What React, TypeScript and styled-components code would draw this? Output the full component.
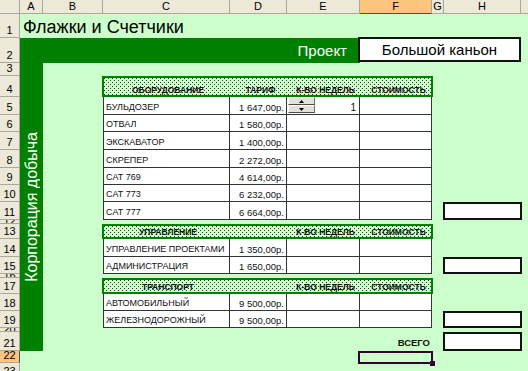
import styled, { createGlobalStyle } from 'styled-components'
import type { ReactNode } from 'react'

const GlobalStyle = createGlobalStyle`
  html, body {
    margin: 0;
    padding: 0;
  }
  body {
    background: #ccffcc;
    font-family: 'Liberation Sans', Arial, sans-serif;
    overflow: hidden;
  }
  * {
    box-sizing: border-box;
  }
`

// widths of columns A..I and heights of rows 1..23, in px
const COL_WIDTHS = [23, 60, 127, 57, 73, 72, 12, 77, 64]
const ROW_HEIGHTS = [24, 25, 13, 21, 18, 17, 18, 18, 17, 17, 18, 4, 15, 18, 17, 4, 16, 17, 17, 4, 19, 12, 16]
const LETTERS = ['A', 'B', 'C', 'D', 'E', 'F', 'G', 'H', '']

// "C4:F11" -> grid-area
const at = (range: string) => {
  const [a, b = a] = range.split(':')
  const col = (s: string) => s.charCodeAt(0) - 63
  const row = (s: string) => parseInt(s.slice(1), 10) + 1
  return `${row(a)} / ${col(a)} / ${row(b) + 1} / ${col(b) + 1}`
}

type Entry = { name: string; price: string; qty?: ReactNode }

const equipment: Entry[] = [
  { name: 'БУЛЬДОЗЕР', price: '1 647,00р.', qty: 1 },
  { name: 'ОТВАЛ', price: '1 580,00р.' },
  { name: 'ЭКСКАВАТОР', price: '1 400,00р.' },
  { name: 'СКРЕПЕР', price: '2 272,00р.' },
  { name: 'CAT 769', price: '4 614,00р.' },
  { name: 'CAT 773', price: '6 232,00р.' },
  { name: 'CAT 777', price: '6 664,00р.' },
]
const management: Entry[] = [
  { name: 'УПРАВЛЕНИЕ ПРОЕКТАМИ', price: '1 350,00р.' },
  { name: 'АДМИНИСТРАЦИЯ', price: '1 650,00р.' },
]
const transport: Entry[] = [
  { name: 'АВТОМОБИЛЬНЫЙ', price: '9 500,00р.' },
  { name: 'ЖЕЛЕЗНОДОРОЖНЫЙ', price: '9 500,00р.' },
]

const Spinner = () => (
  <SpinBox>
    <SpinButton>
      <svg width="5" height="3" viewBox="0 0 5 3"><path d="M2.5 0 5 3H0z" fill="#000" /></svg>
    </SpinButton>
    <SpinButton>
      <svg width="5" height="3" viewBox="0 0 5 3"><path d="M0 0h5L2.5 3z" fill="#000" /></svg>
    </SpinButton>
  </SpinBox>
)

const Table = ({ area, titles, heights, rows }: { area: string; titles: string[]; heights: number[]; rows: Entry[] }) => (
  <TableBlock $area={area}>
    <HeadRow $h={heights[0]}>
      {titles.map((t, i) => (
        <HeadCell key={i}>{t}</HeadCell>
      ))}
    </HeadRow>
    {rows.map((r, i) => (
      <DataRow key={r.name} $h={heights[i + 1]}>
        <NameCell>{r.name}</NameCell>
        <NumCell>{r.price}</NumCell>
        <QtyCell>
          {r.qty !== undefined && (
            <>
              <Spinner />
              <span>{r.qty}</span>
            </>
          )}
        </QtyCell>
        <NumCell />
      </DataRow>
    ))}
  </TableBlock>
)

export default function App() {
  return (
    <>
      <GlobalStyle />
      <Sheet>
        <Corner $area="1 / 1 / 2 / 2" />
        {LETTERS.map((l, i) => (
          <ColHead key={i} $area={`1 / ${i + 2} / 2 / ${i + 3}`} $active={l === 'F'}>
            {l}
          </ColHead>
        ))}
        {ROW_HEIGHTS.map((h, i) => (
          <RowHead key={i} $area={`${i + 2} / 1 / ${i + 3} / 2`} $active={i + 1 === 22} $thin={h < 8}>
            {i + 1}
          </RowHead>
        ))}

        <Title $area={at('A1:F1')}>Флажки и Счетчики</Title>
        <GreenBar $area={at('A2:E2')}>Проект</GreenBar>
        <ProjectBox $area={at('F2:H2')}>Большой каньон</ProjectBox>
        <SideBand $area={at('A3:A21')}>
          <VerticalLabel>Корпорация добыча</VerticalLabel>
        </SideBand>

        <Table
          area={at('C4:F11')}
          titles={['ОБОРУДОВАНИЕ', 'ТАРИФ', 'К-ВО НЕДЕЛЬ', 'СТОИМОСТЬ']}
          heights={[21, 18, 17, 18, 18, 17, 17, 18]}
          rows={equipment}
        />
        <Table
          area={at('C13:F15')}
          titles={['УПРАВЛЕНИЕ', '', 'К-ВО НЕДЕЛЬ', 'СТОИМОСТЬ']}
          heights={[15, 18, 17]}
          rows={management}
        />
        <Table
          area={at('C17:F19')}
          titles={['ТРАНСПОРТ', '', 'К-ВО НЕДЕЛЬ', 'СТОИМОСТЬ']}
          heights={[16, 17, 17]}
          rows={transport}
        />

        <SumBox $area={at('H11')} />
        <SumBox $area={at('H15')} />
        <SumBox $area={at('H19')} />
        <SumBox $area={at('H21')} />
        <TotalLabel $area={at('F21')}>ВСЕГО</TotalLabel>
        <Selection $area={at('F22')} />
      </Sheet>
    </>
  )
}

/**
 * style定義
 */
type AreaProps = { $area: string }

const Sheet = styled.div`
  display: grid;
  grid-template-columns: 20px ${COL_WIDTHS.map((w) => `${w}px`).join(' ')};
  grid-template-rows: 14px ${ROW_HEIGHTS.map((h) => `${h}px`).join(' ')};
  width: 528px;
  height: 371px;
  overflow: hidden;
  background: #ccffcc;
  color: #111;
`

const HeadBase = styled.div<AreaProps & { $active?: boolean; $thin?: boolean }>`
  grid-area: ${(p) => p.$area};
  display: flex;
  justify-content: center;
  overflow: hidden;
  background: ${(p) => (p.$active ? '#fbc57d' : '#ece9d8')};
  border-right: 1px solid #aca899;
  border-bottom: 1px solid #aca899;
  color: #000;
  font-size: 11px;
`
const Corner = styled(HeadBase)``

const ColHead = styled(HeadBase)`
  align-items: center;
  line-height: 13px;
  ${(p) => p.$active && 'border-bottom-color: #2f4f8f;'}
`
const RowHead = styled(HeadBase)`
  align-items: ${(p) => (p.$thin ? 'flex-start' : 'flex-end')};
  padding-bottom: ${(p) => (p.$thin ? 0 : 2)}px;
  line-height: ${(p) => (p.$thin ? 3 : 10)}px;
  ${(p) => p.$active && 'border-right-color: #2f4f8f;'}
`

const Title = styled.div<AreaProps>`
  grid-area: ${(p) => p.$area};
  display: flex;
  align-items: center;
  padding: 2px 0 0 3px;
  font-size: 18px;
  color: #000;
  white-space: nowrap;
`
const GreenBar = styled.div<AreaProps>`
  grid-area: ${(p) => p.$area};
  display: flex;
  align-items: center;
  justify-content: flex-end;
  padding-right: 13px;
  background: #008000;
  color: #fff;
  font-size: 15px;
`
const ProjectBox = styled.div<AreaProps>`
  grid-area: ${(p) => p.$area};
  display: flex;
  align-items: center;
  justify-content: center;
  margin: -1px 0 1px -2px;
  border: 2px solid #111;
  background: #fff;
  color: #000;
  font-size: 15px;
`
const SideBand = styled.div<AreaProps>`
  grid-area: ${(p) => p.$area};
  display: flex;
  align-items: center;
  justify-content: center;
  background: #008000;
`
const VerticalLabel = styled.span`
  writing-mode: vertical-rl;
  transform: rotate(180deg);
  color: #fff;
  font-size: 16px;
  white-space: nowrap;
`

const TableBlock = styled.div<AreaProps>`
  grid-area: ${(p) => p.$area};
  display: flex;
  flex-direction: column;
`
const HeadRow = styled.div<{ $h: number }>`
  display: grid;
  grid-template-columns: 128px 57px 73px 73px;
  height: ${(p) => p.$h}px;
  margin: 0 -1px;
  padding: 0 2px 2px;
  background-color: #ccffcc;
  background-image: conic-gradient(at 1px 1px, transparent 75%, #333 0),
    conic-gradient(at 1px 1px, transparent 75%, #333 0);
  background-size: 4px 4px;
  background-position: 0 0, 2px 2px;
  box-shadow: inset 0 0 0 2px #008000;
`
const HeadCell = styled.div`
  display: flex;
  align-items: flex-end;
  justify-content: center;
  font-size: 8.5px;
  font-weight: bold;
  color: #111;
  white-space: nowrap;
`
const DataRow = styled.div<{ $h: number }>`
  display: grid;
  grid-template-columns: 127px 57px 73px 72px;
  height: ${(p) => p.$h}px;
  background: #fff;
`
const Cell = styled.div`
  display: flex;
  align-items: flex-end;
  padding: 0 2px 1px;
  border-right: 1px solid #333;
  border-bottom: 1px solid #333;
  font-size: 9.5px;
  line-height: 11px;
  white-space: nowrap;
  overflow: hidden;
`
const NameCell = styled(Cell)`
  border-left: 1px solid #333;
  font-size: 9px;
`
const NumCell = styled(Cell)`
  justify-content: flex-end;
`
const QtyCell = styled(Cell)`
  justify-content: space-between;
  padding: 1px 3px 1px 1px;
  font-size: 10px;
`

const SpinBox = styled.div`
  display: flex;
  flex-direction: column;
  width: 27px;
  height: 16px;
`
const SpinButton = styled.div`
  display: flex;
  flex: 1;
  align-items: center;
  justify-content: center;
  background: #e4e1d6;
  border-top: 1px solid #fff;
  border-left: 1px solid #fff;
  border-right: 1px solid #6f6f6f;
  border-bottom: 1px solid #4a4a4a;
`

const SumBox = styled.div<AreaProps>`
  grid-area: ${(p) => p.$area};
  margin: 0 -1px;
  border: 2px solid #111;
  background: #fff;
`
const TotalLabel = styled.div<AreaProps>`
  grid-area: ${(p) => p.$area};
  display: flex;
  align-items: flex-end;
  justify-content: flex-end;
  padding: 0 2px 3px 0;
  font-size: 9.5px;
  font-weight: bold;
  color: #111;
`
const Selection = styled.div<AreaProps>`
  grid-area: ${(p) => p.$area};
  position: relative;
  margin: 0 -1px -1px -2px;
  border: 2px solid #330033;

  &::after {
    position: absolute;
    right: -4px;
    bottom: -4px;
    width: 5px;
    height: 5px;
    background: #330033;
    content: '';
  }
`
